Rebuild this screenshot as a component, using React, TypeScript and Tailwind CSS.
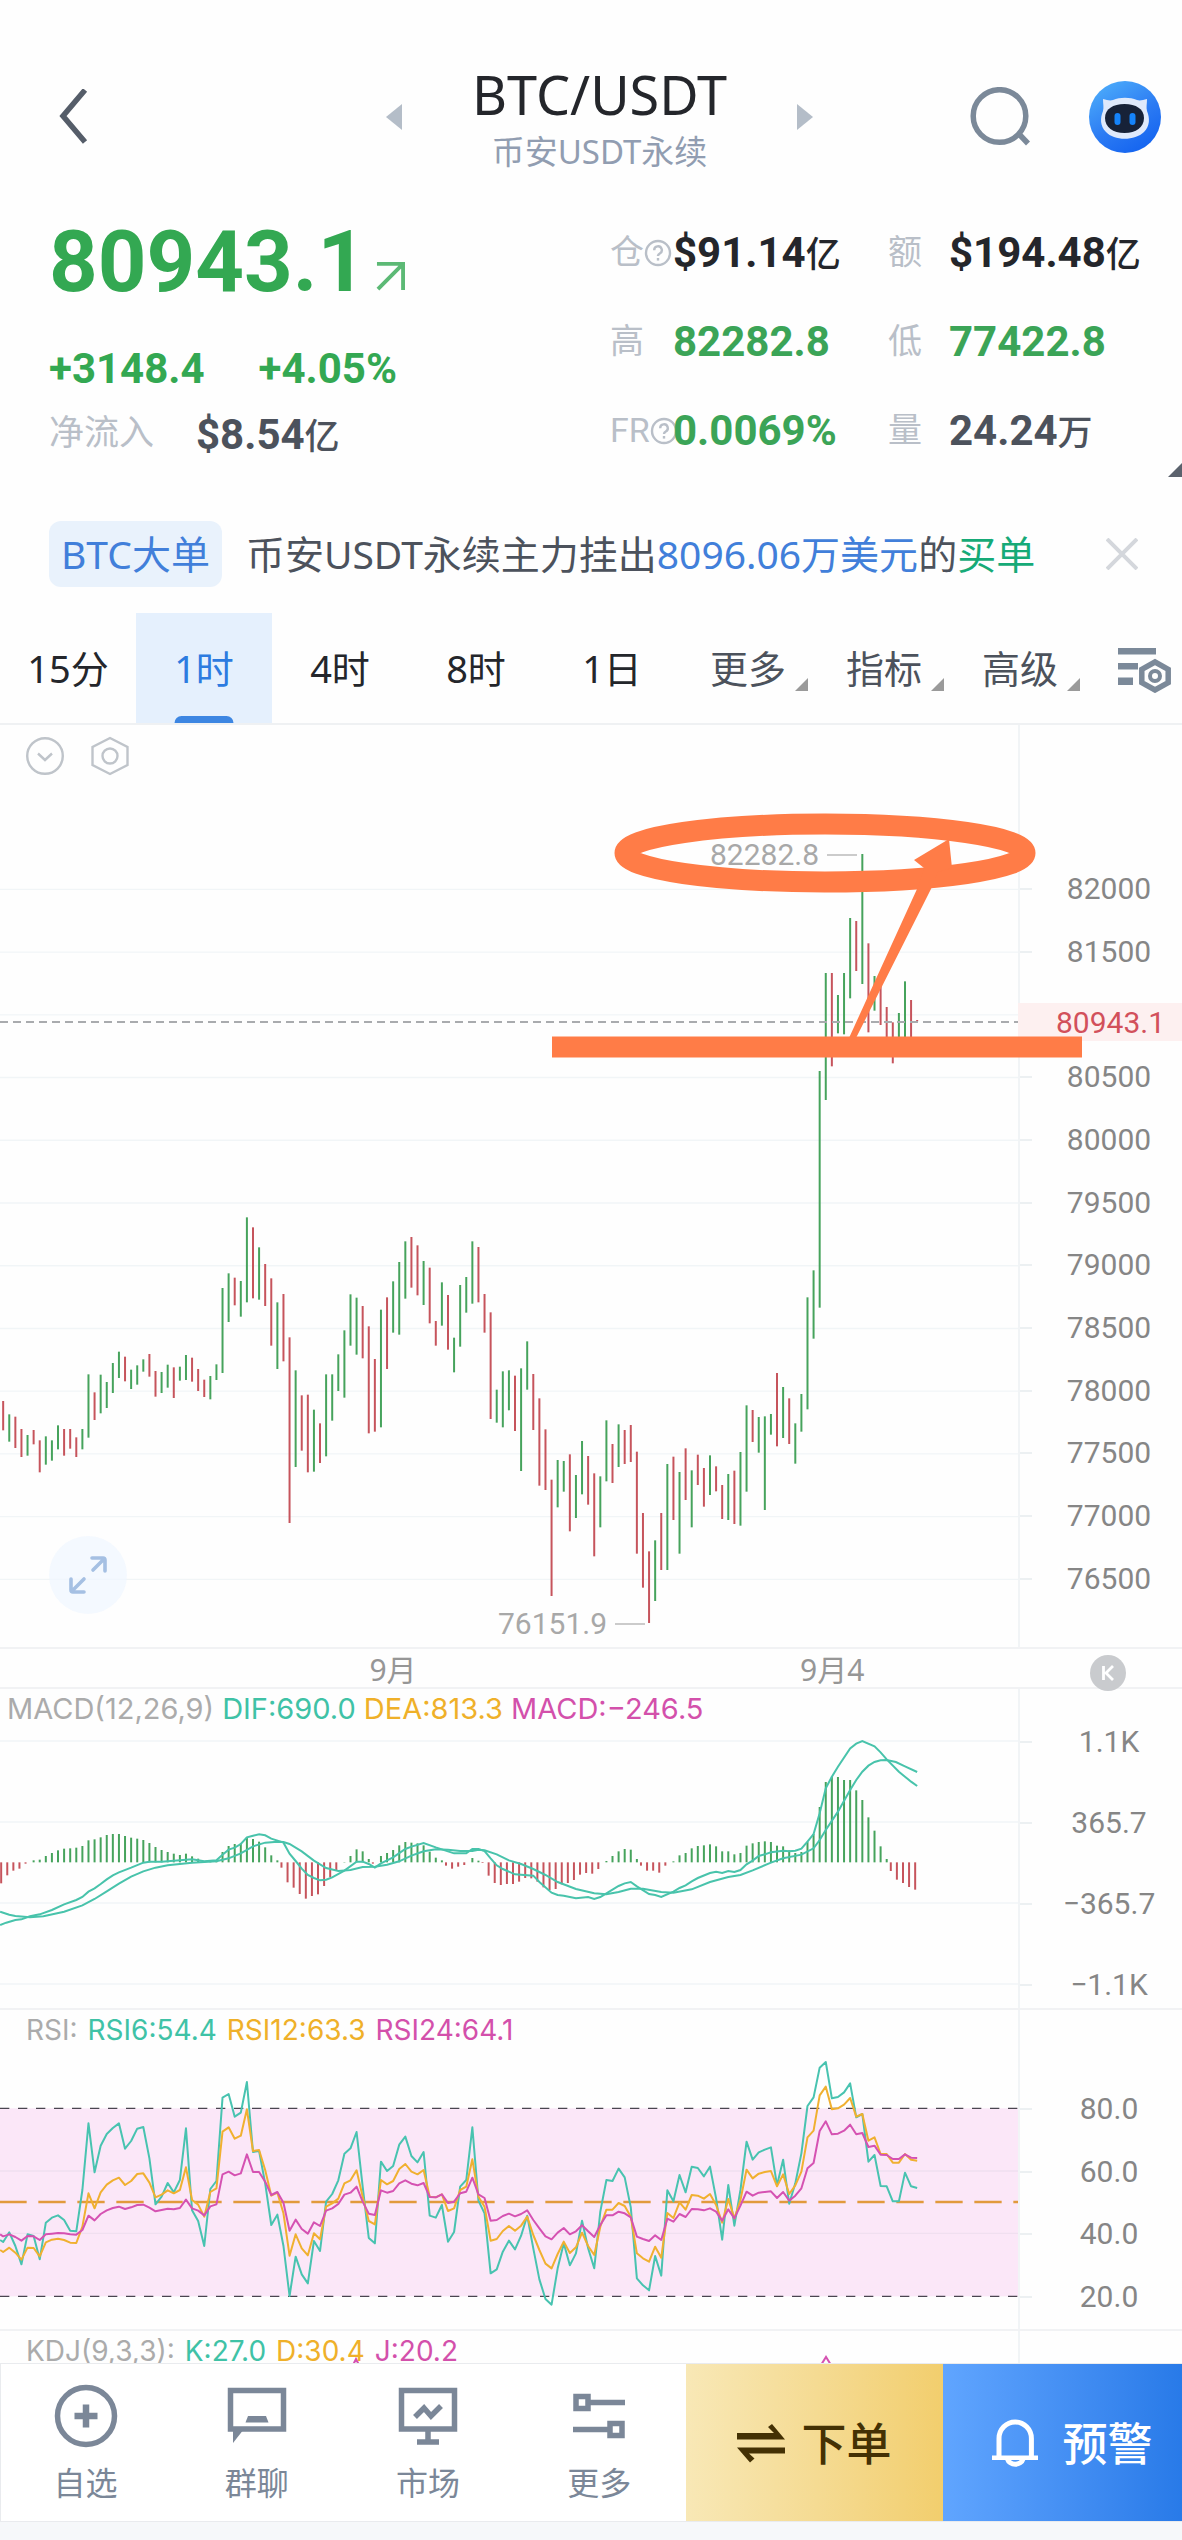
import React, { useState } from 'react';

// Chart geometry is stored in thirds of a pixel, one candle every 18.28 units
const STEP = 18.28;
const candleX = (i: number) => 9.5 + i * STEP;

const U = 1;
const D = 0;
type Candle = [number, number, number];

// [direction, high, low]
const candleGroups: { start: number; offset: number; rows: Candle[] }[] = [
  {
    start: 0,
    offset: 1368,
    rows: [
      [D, 663, 751], [U, 703, 785], [D, 710, 804], [D, 747, 831], [U, 765, 827], [D, 750, 793],
      [D, 781, 877], [U, 769, 854], [U, 781, 842], [U, 736, 808], [D, 747, 827], [D, 747, 806],
      [D, 772, 831], [U, 747, 808], [U, 583, 773], [D, 637, 720], [U, 584, 700], [U, 606, 684],
      [U, 549, 639], [U, 515, 594], [D, 530, 604], [U, 569, 627], [U, 556, 614], [U, 538, 575],
      [D, 522, 590], [D, 573, 650], [U, 576, 639], [U, 554, 623], [D, 562, 654], [U, 560, 602],
      [U, 525, 600], [D, 533, 605], [D, 567, 633], [D, 599, 651], [U, 588, 658], [U, 553, 600],
      [U, 324, 579], [U, 280, 426], [D, 293, 376], [U, 303, 410], [U, 112, 367], [D, 142, 355],
      [U, 202, 359], [D, 252, 378], [D, 295, 497], [U, 367, 567], [D, 342, 544], [D, 472, 1029],
      [U, 571, 861], [D, 646, 812], [D, 644, 877], [U, 689, 875], [D, 730, 849], [U, 583, 829],
      [U, 583, 722], [U, 523, 633], [U, 451, 653], [U, 343, 497], [U, 353, 524], [D, 378, 535],
      [D, 439, 760], [D, 537, 755], [U, 389, 742], [D, 352, 567], [U, 304, 458], [U, 246, 464],
      [U, 184, 356], [D, 171, 323], [D, 196, 346], [U, 243, 375], [D, 263, 430], [D, 423, 497],
      [U, 307, 437], [D, 345, 509], [U, 473, 577], [U, 315, 500], [U, 291, 398], [U, 184, 371],
      [D, 201, 367], [D, 342, 458], [D, 397, 717], [U, 629, 728], [U, 574, 742], [U, 571, 691],
      [D, 587, 753], [U, 565, 873],
    ],
  },
  {
    start: 86,
    offset: 1488,
    rows: [
      [U, 364, 509], [D, 462, 630], [D, 535, 797], [D, 628, 810], [D, 779, 1128], [U, 720, 862],
      [U, 723, 815], [D, 703, 934], [U, 765, 894], [U, 663, 823], [D, 708, 854], [D, 760, 1009],
      [U, 769, 922], [U, 601, 784], [D, 672, 789], [U, 613, 741], [D, 630, 732], [D, 615, 726],
      [D, 695, 1001], [D, 879, 1103], [D, 994, 1209], [U, 961, 1143], [D, 879, 1050], [U, 732, 1050],
      [D, 710, 900], [U, 756, 1001], [D, 685, 840], [U, 751, 922], [D, 704, 795], [D, 744, 860],
      [U, 706, 825], [D, 739, 814], [D, 795, 897], [U, 762, 900], [D, 752, 912], [U, 696, 917],
      [U, 556, 815], [D, 570, 666], [U, 591, 698], [U, 589, 870], [U, 582, 644], [D, 459, 679],
      [U, 501, 654], [D, 535, 672], [U, 610, 731], [U, 522, 635], [U, 232, 568], [U, 151, 356],
      [U, -447, 263],
    ],
  },
  {
    start: 135,
    offset: 168,
    rows: [
      [U, 579, 960], [D, 579, 859], [U, 645, 760], [U, 579, 763], [U, 414, 655], [D, 423, 573],
      [U, 222, 612], [D, 490, 757], [U, 588, 692], [D, 610, 735], [D, 681, 800], [D, 727, 850],
      [U, 699, 800], [U, 604, 800], [D, 660, 800], [D, 720, 724],
    ],
  },
];

const macdBars = [
  -63, -39, -25, -19, -4, 6, 8, 19, 28, 36, 41, 42, 44, 49, 66, 69, 75, 82, 85, 85, 79, 74, 71, 67, 58, 46, 37, 31,
  26, 22, 26, 18, 11, 4, 3, 5, 31, 49, 55, 57, 75, 70, 62, 45, 21, 6, -16, -60, -76, -95, -109, -101, -96, -71, -45,
  -24, 1, 19, 39, 33, 10, -4, 19, 28, 37, 51, 61, 59, 57, 51, 32, 14, 6, -10, -19, -13, -8, 13, 5, -2, -40, -62, -68,
  -65, -65, -58, -47, -48, -58, -75, -83, -80, -66, -62, -53, -37, -32, -34, -20, 4, 19, 33, 40, 38, 10, -10, -25,
  -25, -31, -10, 3, 21, 28, 42, 49, 51, 54, 48, 33, 33, 24, 28, 50, 57, 61, 63, 61, 50, 48, 36, 28, 31, 62, 85, 166,
  241, 257, 256, 247, 247, 216, 187, 135, 95, 48, 10, -26, -52, -62, -74, -82,
];

type Point = [number, number];

const difLine: Point[] = [
  [-0.5, 735], [0.5, 728], [2, 720], [3, 718], [4.4, 709], [6, 703], [8, 690], [10, 673], [12, 660], [13, 651],
  [14, 635], [15, 625], [16, 612], [17, 598], [18, 586], [19, 577], [21, 563], [23, 548], [24, 545], [26, 545],
  [29, 541], [31, 538], [33, 544], [35, 541], [36, 524], [37, 509], [38, 503], [39, 492], [40, 472], [41, 467],
  [42, 463], [43, 466], [44, 476], [46, 488], [47, 521], [48, 543], [49, 566], [50, 585], [51, 594], [52, 601],
  [53, 599], [54, 592], [56, 572], [58, 545], [59, 545], [60, 552], [61, 563], [62, 550], [64, 532], [66, 507],
  [67, 500], [69, 489], [71, 502], [73, 514], [74, 520], [76, 520], [77, 507], [78, 507], [79, 513], [80, 535],
  [81, 556], [82, 567], [84, 583], [87, 587], [88, 606], [90, 638], [91, 645], [92, 647], [94, 655], [96, 651],
  [97, 657], [98, 651], [99, 640], [101, 618], [102, 610], [103, 606], [104, 619], [106, 642], [107, 645],
  [108, 651], [110, 635], [111, 624], [112, 616], [113, 604], [114, 594], [116, 579], [117, 575], [118, 579],
  [119, 573], [120, 576], [121, 570], [122, 553], [123, 542], [124, 528], [125, 523], [126, 517], [128, 512],
  [129, 514], [130, 512], [131, 506], [132, 485], [133, 462], [134, 400], [135, 325], [136, 290], [137, 260],
  [139, 205], [140, 191], [141, 183], [143, 199], [144, 217], [145, 238], [147, 275], [148, 290], [149, 305],
  [150, 318],
];

const deaLine: Point[] = [
  [-0.5, 695], [1, 704], [2, 708], [4.4, 712], [6.6, 709], [10, 695], [13, 676], [15, 657], [17, 634], [19, 611],
  [21, 590], [23, 574], [25, 563], [27, 556], [29, 552], [31, 548], [33, 546], [35, 544], [37, 535], [39, 520],
  [41, 499], [43, 488], [45, 485], [46, 486], [47, 492], [49, 514], [51, 542], [53, 564], [55, 573], [57, 570],
  [59, 561], [61, 560], [63, 554], [65, 544], [67, 527], [69, 514], [71, 508], [73, 509], [75, 513], [77, 513],
  [78, 509], [79, 511], [81, 523], [83, 541], [85, 552], [87, 567], [89, 585], [91, 606], [94, 627], [97, 640],
  [99, 643], [101, 636], [103, 626], [105, 626], [108, 636], [110, 638], [113, 628], [116, 606], [119, 591],
  [121, 585], [123, 571], [126, 548], [128, 535], [131, 524], [133, 505], [134, 480], [135, 450], [137, 395],
  [139, 330], [140, 300], [141, 275], [142, 257], [143, 246], [144, 241], [145, 240], [146.5, 246], [148, 259],
  [150, 276],
];

const rsi6 = [
  726, 697, 738, 793, 703, 708, 778, 668, 653, 646, 660, 692, 694, 570, 370, 517, 437, 402, 384, 370, 446, 423, 386,
  381, 475, 613, 590, 549, 577, 540, 385, 631, 663, 738, 567, 543, 293, 282, 350, 338, 246, 456, 453, 550, 675, 644,
  738, 888, 770, 823, 850, 723, 753, 605, 582, 541, 461, 445, 396, 560, 714, 730, 485, 513, 498, 434, 410, 468, 487,
  456, 647, 653, 615, 725, 696, 560, 540, 382, 602, 640, 820, 808, 755, 722, 748, 707, 647, 745, 838, 897, 914, 805,
  730, 796, 760, 662, 745, 805, 635, 540, 543, 506, 532, 622, 835, 856, 871, 768, 827, 571, 604, 525, 577, 500, 504,
  529, 500, 595, 719, 555, 677, 570, 425, 479, 457, 449, 442, 556, 479, 611, 550, 460, 318, 292, 203, 186, 295, 291,
  277, 250, 352, 342, 485, 465, 558, 559, 604, 604, 518, 559, 564,
];

const rsi12 = [
  756, 743, 758, 779, 743, 744, 769, 727, 719, 716, 720, 728, 729, 680, 580, 625, 577, 554, 541, 533, 555, 543, 522,
  520, 548, 592, 584, 571, 580, 570, 502, 600, 614, 650, 576, 565, 395, 382, 416, 407, 328, 453, 450, 510, 587, 578,
  640, 767, 703, 745, 766, 700, 718, 620, 610, 596, 550, 541, 511, 590, 663, 673, 540, 553, 543, 507, 492, 515, 523,
  510, 590, 592, 583, 633, 625, 570, 560, 478, 590, 620, 722, 717, 693, 678, 692, 677, 650, 705, 750, 791, 805, 762,
  725, 759, 742, 698, 738, 765, 680, 629, 629, 609, 618, 650, 760, 775, 785, 740, 773, 639, 654, 607, 629, 585, 587,
  596, 582, 615, 668, 597, 655, 600, 509, 535, 521, 516, 513, 559, 523, 582, 556, 515, 412, 392, 286, 260, 328, 325,
  314, 294, 350, 342, 422, 412, 462, 462, 488, 488, 462, 479, 482,
];

const rsi24 = [
  709, 703, 711, 722, 708, 709, 720, 703, 701, 699, 700, 703, 704, 690, 647, 661, 642, 631, 624, 620, 627, 622, 615,
  614, 623, 634, 630, 626, 628, 624, 599, 625, 632, 646, 619, 613, 523, 515, 526, 520, 463, 516, 516, 545, 585, 576,
  608, 692, 659, 687, 701, 667, 678, 632, 625, 612, 584, 578, 560, 605, 641, 645, 571, 578, 573, 550, 541, 551, 556,
  549, 591, 592, 583, 609, 605, 580, 575, 533, 583, 594, 662, 660, 648, 641, 649, 642, 631, 660, 685, 709, 718, 698,
  684, 703, 694, 676, 694, 711, 675, 646, 646, 635, 640, 652, 710, 717, 723, 706, 720, 656, 665, 642, 651, 627, 628,
  631, 625, 635, 662, 628, 655, 617, 575, 587, 578, 576, 574, 594, 576, 602, 587, 565, 505, 489, 393, 364, 403, 401,
  392, 374, 403, 399, 441, 437, 464, 465, 477, 477, 463, 473, 474,
];

const toPoints = (line: Point[]) => line.map(([i, y]) => `${candleX(i)},${y}`).join(' ');
const seriesPoints = (ys: number[]) => toPoints([[-0.5, ys[0] - 6] as Point, ...ys.map((y, i) => [i, y] as Point)]);

const priceLabels = ['82000', '81500', '', '80500', '80000', '79500', '79000', '78500', '78000', '77500', '77000', '76500'];
const macdLabels = ['1.1K', '365.7', '−365.7', '−1.1K'];
const rsiLabels = ['80.0', '60.0', '40.0', '20.0'];

const periods = ['15分', '1时', '4时', '8时', '1日'];
const menus = ['更多', '指标', '高级'];

const HelpIcon = () => (
  <svg className="h-7 w-7 shrink-0 text-[#b9bfc8]" viewBox="0 0 28 28" fill="none" stroke="currentColor" strokeWidth="2.4">
    <circle cx="14" cy="14" r="12" />
    <path d="M10.2 11.2a3.8 3.8 0 1 1 5.6 3.3c-1.2.7-1.8 1.2-1.8 2.6" />
    <path d="M14 19v2.6" />
  </svg>
);

const Header = () => (
  <header className="grid grid-cols-[386px_1fr_369px] items-center pt-[60px] pb-[34px]">
    <button aria-label="返回" className="ml-[57px] w-8">
      <svg className="h-14 w-8" viewBox="0 0 32 56" fill="none" stroke="#555d69" strokeWidth="5.5">
        <path d="M28 1 6 27l22 26" />
      </svg>
    </button>
    <div className="flex items-center justify-between">
      <button aria-label="上一个">
        <svg className="h-[26px] w-4" viewBox="0 0 16 26">
          <path d="M16 0v26L0 13z" fill="#b4bdc8" />
        </svg>
      </button>
      <div className="text-center">
        <h1 className="text-[54px] leading-[68px] text-[#24262b]">BTC/USDT</h1>
        <p className="mt-0.5 text-[33px] leading-[44px] text-[#919db1]">币安USDT永续</p>
      </div>
      <button aria-label="下一个">
        <svg className="h-[26px] w-4" viewBox="0 0 16 26">
          <path d="M0 0v26l16-13z" fill="#b4bdc8" />
        </svg>
      </button>
    </div>
    <div className="flex items-center justify-end gap-[58px] pr-[21px]">
      <button aria-label="搜索">
        <svg className="h-[60px] w-[61px]" viewBox="0 0 61 60" fill="none" stroke="#7b8999" strokeWidth="5.5">
          <circle cx="29.5" cy="29" r="26.3" />
          <path d="m48 46 10 10.5" />
        </svg>
      </button>
      <button aria-label="AI助手">
        <svg className="h-[72px] w-[72px]" viewBox="0 0 72 72">
          <defs>
            <linearGradient id="botBg" x1="0.1" y1="0" x2="0.7" y2="1">
              <stop offset="0" stopColor="#4fb0fb" />
              <stop offset="0.6" stopColor="#2b7af3" />
              <stop offset="1" stopColor="#1464f0" />
            </linearGradient>
          </defs>
          <circle cx="36" cy="36" r="36" fill="url(#botBg)" />
          <path d="M14 18c4 1 7 2 10 1 7-3 17-3 24 0 3 1 6 0 10-1 0 5-1 8 0 12 3 7 3 15-3 21-9 9-30 9-38 0-6-6-6-14-3-21 1-4 0-7 0-12z" fill="#dfe9fb" />
          <path d="M16 37c0-9 8-14 19.5-14S55 28 55 37s-8 15-19.5 15S16 46 16 37z" fill="#172238" />
          <rect x="25.5" y="32" width="6" height="12" rx="3" fill="#1583fa" />
          <rect x="40.5" y="32" width="6" height="12" rx="3" fill="#1583fa" />
        </svg>
      </button>
    </div>
  </header>
);

const Stats = () => (
  <section className="relative flex font-['Roboto','Noto_Sans_CJK_SC',sans-serif]">
    <div className="flex-1 pl-[49px]">
      <div className="flex h-[108px] items-center text-[#33a852]">
        <span className="text-[85px] leading-none font-bold">80943.1</span>
        <svg className="mt-7 ml-[10px] h-[29px] w-[29px]" viewBox="0 0 30 30" fill="none" stroke="#5cb975" strokeWidth="4">
          <path d="M1 2h27v27M28 2 2 28" />
        </svg>
      </div>
      <div className="mt-[14px] flex h-[76px] items-center gap-[54px] text-[42px] font-bold text-[#33a852]">
        <span>+3148.4</span>
        <span>+4.05%</span>
      </div>
      <div className="flex h-14 items-center">
        <span className="text-[35px] text-[#b9bfc8]">净流入</span>
        <span className="ml-[42px] text-[42px] font-bold text-[#4c525c]">
          $8.54<span className="text-[35px] font-medium">亿</span>
        </span>
      </div>
    </div>
    <div className="grid w-[572px] auto-rows-[89px] grid-cols-[63px_215px_61px_1fr] items-center text-[42px] font-bold whitespace-nowrap text-[#24262b]">
      <span className="flex items-center text-[34px] font-normal text-[#b9bfc8]">仓<HelpIcon /></span>
      <span>$91.14<span className="text-[35px] font-medium">亿</span></span>
      <span className="text-[34px] font-normal text-[#b9bfc8]">额</span>
      <span>$194.48<span className="text-[35px] font-medium">亿</span></span>
      <span className="text-[34px] font-normal text-[#b9bfc8]">高</span>
      <span className="text-[#3ba457]">82282.8</span>
      <span className="text-[34px] font-normal text-[#b9bfc8]">低</span>
      <span className="text-[#3ba457]">77422.8</span>
      <span className="flex items-center text-[34px] font-normal text-[#b9bfc8]">FR<HelpIcon /></span>
      <span className="text-[#3ba457]">0.0069%</span>
      <span className="text-[34px] font-normal text-[#b9bfc8]">量</span>
      <span className="text-[#4c525c]">24.24<span className="text-[35px] font-medium">万</span></span>
    </div>
    <svg className="absolute right-0 -bottom-0.5 h-[14px] w-[14px]" viewBox="0 0 14 14">
      <path d="M14 0v14H0z" fill="#5b626d" />
    </svg>
  </section>
);

const Banner = () => (
  <section className="mt-[46px] flex h-[66px] items-center pr-11 pl-[49px] text-[39px] whitespace-nowrap">
    <span className="flex h-full items-center rounded-xl bg-[#e9f2fc] px-3 text-[#417fda]">BTC大单</span>
    <p className="ml-6 text-[#4c525c]">
      币安USDT永续主力挂出<a href="#" className="text-[#417fda]">8096.06万美元</a>的<span className="text-[#16aa77]">买单</span>
    </p>
    <button aria-label="关闭" className="ml-auto">
      <svg className="h-8 w-8" viewBox="0 0 32 32" stroke="#d4d7dc" strokeWidth="4">
        <path d="m1 1 30 30M31 1 1 31" />
      </svg>
    </button>
  </section>
);

const Tabs = () => {
  const [active, setActive] = useState('1时');

  return (
    <nav className="mt-[26px] flex h-28 border-b-2 border-[#eff1f3] text-[38px]">
      {periods.map((period) => (
        <button
          key={period}
          onClick={() => setActive(period)}
          className={
            active === period
              ? 'relative basis-[136px] bg-[#e5f0fd] text-[#2c7be0]'
              : 'relative basis-[136px] text-[#24262b]'
          }
        >
          {period}
          {active === period && (
            <span className="absolute bottom-0 left-1/2 h-[7px] w-[59px] -translate-x-1/2 rounded-t-lg bg-[#3d86e2]" />
          )}
        </button>
      ))}
      {menus.map((menu) => (
        <button key={menu} className="relative basis-[136px] text-[#4c525c]">
          {menu}
          <svg className="absolute right-2 bottom-8 h-[13px] w-[13px]" viewBox="0 0 13 13">
            <path d="M13 0v13H0z" fill="#9a9a9a" />
          </svg>
        </button>
      ))}
      <button aria-label="图表设置" className="flex flex-1 items-center justify-end pt-1 pr-[11px]">
        <svg className="h-[45px] w-[53px]" viewBox="0 0 53 45" fill="#7b8999">
          <path d="M0 0h38v6.5H0zM0 15h20v6.5H0zM0 29.5h15V37H0z" />
          <path d="m37 14 13.2 7.4v13.2L37 42l-13.2-7.4V21.4z" fill="none" stroke="#7b8999" strokeWidth="5.5" />
          <circle cx="37" cy="28" r="5" fill="none" stroke="#7b8999" strokeWidth="4" />
        </svg>
      </button>
    </nav>
  );
};

const Candles = () => (
  <svg className="block h-full w-full" viewBox="0 3 3054 2766" preserveAspectRatio="none">
    {priceLabels.map((_, i) => (
      <line key={i} x1="0" x2="3054" y1={496 + i * 188.2} y2={496 + i * 188.2} stroke="#f1f5f7" strokeWidth="4" />
    ))}
    {candleGroups.map((group) => (
      <g key={group.start} transform={`translate(0 ${group.offset})`}>
        {group.rows.map(([dir, high, low], i) => (
          <line
            key={i}
            x1={candleX(group.start + i)}
            x2={candleX(group.start + i)}
            y1={high}
            y2={low}
            stroke={dir === U ? '#46a35c' : '#c6545c'}
            strokeWidth="6"
          />
        ))}
      </g>
    ))}
    <line x1="0" x2="3054" y1="894" y2="894" stroke="#a9abae" strokeWidth="6" strokeDasharray="24 15" />
  </svg>
);

// Hand-drawn marks over the price chart
const Drawings = () => (
  <svg className="pointer-events-none absolute inset-0 h-full w-full" viewBox="0 1 1182 922" preserveAspectRatio="none">
    <ellipse cx="825" cy="129" rx="200" ry="29" fill="none" stroke="#ff7c47" strokeWidth="21" />
    <path d="M849 314 917 165l7-21-10-8 35-21 3 29-14 4-7 17-75 149z" fill="#ff7c47" />
    <path d="M552 312.5h530v21H552z" fill="#ff7c47" />
  </svg>
);

const Ticks = ({ labels, className }: { labels: string[]; className: string }) => (
  <div className={`flex w-[164px] shrink-0 flex-col justify-between border-l-2 border-[#f1f4f6] font-['Roboto',sans-serif] text-[30px] leading-[30px] text-[#868686] ${className}`}>
    {labels.map((label, i) => (
      <div key={i} className="flex h-[30px] items-center">
        <span className="h-0.5 w-3 bg-[#ecf0f2]" />
        <span className="flex-1 pl-1 text-center">{label}</span>
      </div>
    ))}
  </div>
);

const Legend = ({ items, className }: { items: string[]; className: string }) => (
  <div className={`absolute top-0 flex h-10 items-center font-['Inter',sans-serif] whitespace-nowrap ${className}`}>
    <span className="text-[#ababab]">{items[0]}</span>
    <span className="text-[#3fc2a6]">{items[1]}</span>
    <span className="text-[#efb029]">{items[2]}</span>
    <span className="text-[#d350ab]">{items[3]}</span>
  </div>
);

const PricePanel = () => (
  <section className="relative flex h-[924px] border-b-2 border-[#f1f2f4]">
    <div className="relative flex-1">
      <Candles />
      <div className="absolute top-[11px] left-[26px] flex gap-[27px] text-[#bfc4ca]">
        <button aria-label="收起">
          <svg className="h-10 w-[38px]" viewBox="0 0 38 40" fill="none" stroke="currentColor" strokeWidth="2.4">
            <circle cx="19" cy="20" r="17.8" />
            <path d="m12 17.5 7 6.5 7-6.5" />
          </svg>
        </button>
        <button aria-label="设置">
          <svg className="h-10 w-[38px]" viewBox="0 0 38 40" fill="none" stroke="currentColor" strokeWidth="2.4">
            <path d="m19 2 17.5 9v18L19 38 1.5 29V11z" />
            <circle cx="19" cy="20" r="7.5" />
          </svg>
        </button>
      </div>
      <div className="absolute top-[115px] left-[710px] flex items-center gap-2 font-['Roboto',sans-serif] text-[30px] leading-[30px] text-[#a8a8a8]">
        82282.8<span className="h-0.5 w-[30px] bg-[#cbcbcb]" />
      </div>
      <div className="absolute top-[884px] left-[498px] flex items-center gap-2 font-['Roboto',sans-serif] text-[30px] leading-[30px] text-[#a8a8a8]">
        76151.9<span className="h-0.5 w-[30px] bg-[#cbcbcb]" />
      </div>
      <button aria-label="全屏" className="absolute bottom-[33px] left-[49px] flex h-[78px] w-[78px] items-center justify-center rounded-full bg-[#f0f6ff]/70">
        <svg className="h-[38px] w-[38px]" viewBox="0 0 38 38" fill="none" stroke="#a5c0e3" strokeWidth="3.6" strokeLinecap="round" strokeLinejoin="round">
          <path d="M23 2h11a2 2 0 0 1 2 2v11M35 3 24 14M15 36H4a2 2 0 0 1-2-2V23M3 35l12-12" />
        </svg>
      </button>
    </div>
    <Ticks labels={priceLabels} className="pt-[149px] pb-[53px]" />
    <div className="absolute top-[278px] right-0 flex h-[38px] w-[164px] items-center bg-[#fdf0f0] pl-[38px] font-['Roboto',sans-serif] text-[30px] text-[#d2505b]">
      80943.1
    </div>
    <Drawings />
  </section>
);

const TimeAxis = () => (
  <section className="relative z-10 grid h-10 grid-cols-[786px_1fr_148px] items-center border-b-2 border-[#f1f2f4] text-[30px] leading-[30px] text-[#969696]">
    <span className="text-center">9月</span>
    <span className="pl-[14px]">9月4</span>
    <button aria-label="回到最新" className="mt-1.5 ml-14">
      <svg className="block h-9 w-9" viewBox="0 0 36 36">
        <circle cx="18" cy="18" r="18" fill="#c9cbce" />
        <path d="M13.5 11v14M23 11l-7 7 7 7" fill="none" stroke="#fff" strokeWidth="2.8" />
      </svg>
    </button>
  </section>
);

const MacdPanel = () => (
  <section className="flex h-[321px] border-b-2 border-[#f1f2f4]">
    <div className="relative flex-1">
      <svg className="block h-full w-full" viewBox="0 27 3054 957" preserveAspectRatio="none">
        {[183, 426, 669, 912].map((y) => (
          <line key={y} x1="0" x2="3054" y1={y} y2={y} stroke="#f1f5f7" strokeWidth="4" />
        ))}
        {macdBars.map((v, i) => {
          const x = v < 0 ? candleX(i) - 6 : candleX(i);
          return <line key={i} x1={x} x2={x} y1={547} y2={547 - v} stroke={v < 0 ? '#c6545c' : '#46a35c'} strokeWidth="6" />;
        })}
        <polyline points={toPoints(difLine)} fill="none" stroke="#48c3ab" strokeWidth="6" />
        <polyline points={toPoints(deaLine)} fill="none" stroke="#48c3ab" strokeWidth="6" />
      </svg>
      <Legend items={['MACD(12,26,9)', 'DIF:690.0', 'DEA:813.3', 'MACD:−246.5']} className="left-[7px] gap-2 text-[29px]" />
    </div>
    <Ticks labels={macdLabels} className="pt-[38px] pb-2" />
  </section>
);

const RsiPanel = () => (
  <section className="flex h-[321px] border-b-2 border-[#f1f2f4]">
    <div className="relative flex-1">
      <svg className="block h-full w-full" viewBox="0 30 3054 957" preserveAspectRatio="none" fill="none" strokeWidth="6" strokeLinejoin="round">
        <rect x="0" y="325" width="3054" height="564" fill="#fbe7f8" />
        <path d="M0 513h3054M0 700h3054" stroke="#f0dff0" strokeWidth="4" />
        <path d="M0 325h3054M0 889h3054" stroke="#4a4550" strokeWidth="4" strokeDasharray="28 26" />
        <path d="M0 606h3054" stroke="#e19a3c" strokeWidth="7" strokeDasharray="82 35" strokeDashoffset="2" />
        <polyline points={seriesPoints(rsi6)} stroke="#48c3b0" />
        <polyline points={seriesPoints(rsi12)} stroke="#f0b030" />
        <polyline points={seriesPoints(rsi24)} stroke="#d552b2" />
      </svg>
      <Legend items={['RSI:', 'RSI6:54.4', 'RSI12:63.3', 'RSI24:64.1']} className="left-[26px] gap-2.5 text-[28px]" />
    </div>
    <Ticks labels={rsiLabels} className="pt-[84px] pb-[17px]" />
  </section>
);

// Only the top strip of KDJ shows above the action bar
const KdjPanel = () => (
  <section className="flex h-8 overflow-hidden">
    <div className="relative flex-1">
      <Legend items={['KDJ(9,3,3):', 'K:27.0', 'D:30.4', 'J:20.2']} className="left-[26px] gap-2.5 text-[28px]" />
      <svg className="absolute inset-0 h-full w-full" viewBox="0 0 1018 32" preserveAspectRatio="none">
        <path d="m353 34 3-6 3 6M821 34l5-8 5 8" fill="none" stroke="#d552b2" strokeWidth="2" />
      </svg>
    </div>
    <div className="w-[164px] border-l-2 border-[#f1f4f6]" />
  </section>
);

const navItems = [
  {
    label: '自选',
    icon: (
      <>
        <circle cx="32" cy="32" r="28.5" />
        <path d="M32 20.5v23M20.5 32h23" strokeWidth="6.5" />
      </>
    ),
  },
  {
    label: '群聊',
    icon: (
      <>
        <path d="M5.5 6.5h53V45h-53z" />
        <path d="M8 45h11L8 59z" fill="currentColor" stroke="none" />
        <path d="M23 32h18l2.500 6.500h-23z" fill="currentColor" stroke="none" />
      </>
    ),
  },
  {
    label: '市场',
    icon: (
      <>
        <path d="M5.5 6.5h53V45h-53zM32 45v12M21 58h22" />
        <path d="m19 33 9-9 7 8 10-10" />
      </>
    ),
  },
  {
    label: '更多',
    icon: <path d="M9 12.5h12v12H9zM22 18.5h36M43 39.5h12v12H43zM6 45.5h36" />,
  },
];

const BottomBar = () => (
  <footer className="bg-[#f6f8fa] pb-[18px]">
    <div className="flex h-[159px] border-y border-l border-[#e9ebee] bg-white">
      {navItems.map((item) => (
        <button key={item.label} className="flex flex-1 flex-col items-center pt-5 pr-0.5 text-[#7b8798]">
          <svg className="h-16 w-16" viewBox="0 0 64 64" fill="none" stroke="currentColor" strokeWidth="5.5">
            {item.icon}
          </svg>
          <span className="mt-[15px] text-[32px] leading-10">{item.label}</span>
        </button>
      ))}
      <button className="flex w-[257px] items-center justify-center gap-4 bg-linear-to-r from-[#f8e8b6] to-[#f2ce6d] pt-0.5 text-[45px] font-medium text-[#443104]">
        <svg className="h-[39px] w-12" viewBox="0 0 48 39" fill="currentColor">
          <path d="M0 9h37l-6-6 4-3 13 15.5H0zM48 23.5H0L13 38.5l4.5-4-5.500-5h36z" />
        </svg>
        下单
      </button>
      <button className="flex w-[239px] items-center justify-center gap-6 bg-linear-to-r from-[#60a5ff] to-[#287ae8] pt-0.5 pl-5 text-[45px] font-medium text-white">
        <svg className="h-[49px] w-[46px]" viewBox="0 0 46 49" fill="none" stroke="currentColor" strokeWidth="5">
          <path d="M7 38V19.5a16.2 16.5 0 0 1 32.4 0V38" />
          <path d="M0 38.700h46" strokeWidth="4.5" />
          <path d="M15.5 40a8 7 0 0 0 15.5 0" />
        </svg>
        预警
      </button>
    </div>
  </footer>
);

const App = () => {
  return (
    <div lang="zh-CN" className="bg-[#fefefe] font-['Noto_Sans','Noto_Sans_CJK_SC',sans-serif]">
      <Header />
      <Stats />
      <Banner />
      <Tabs />
      <main>
        <PricePanel />
        <TimeAxis />
        <MacdPanel />
        <RsiPanel />
        <KdjPanel />
      </main>
      <BottomBar />
    </div>
  );
};

export default App;
